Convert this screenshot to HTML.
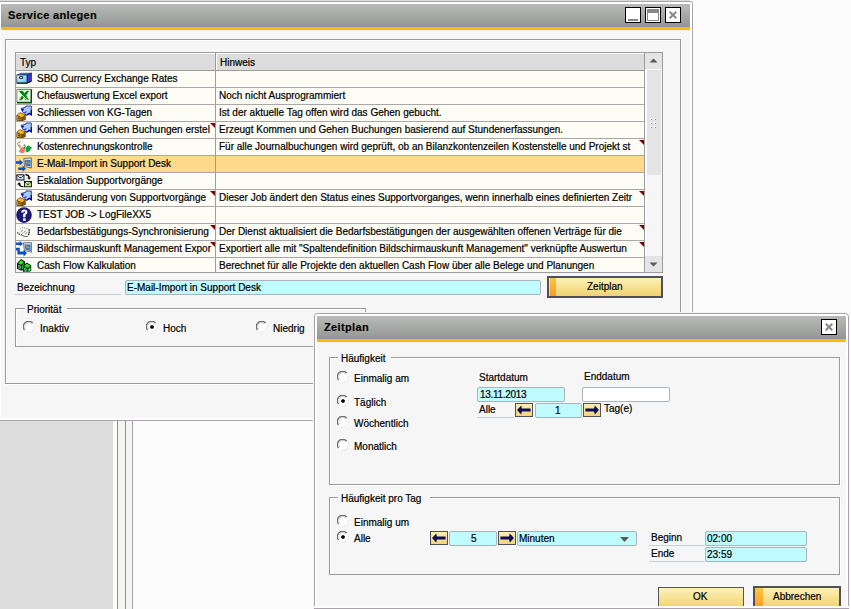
<!DOCTYPE html>
<html><head><meta charset="utf-8"><style>
*{margin:0;padding:0;box-sizing:border-box}
html,body{width:851px;height:609px;overflow:hidden;background:#fcfcfc;font-family:"Liberation Sans",sans-serif;font-size:10px;color:#000}
.a{position:absolute}
.t{position:absolute;white-space:nowrap;line-height:12px;height:12px;-webkit-text-stroke:0.2px #000}
.title{background:linear-gradient(#bcbdbb,#8e8f8d)}
.yel{background:#fbb80d}
.inp{position:absolute;background:#bffbff;border:1px solid #a9b5b8;border-radius:2px}
.btn{position:absolute;background:linear-gradient(#fdf1b9,#f1d26f);border:1px solid #55555c}
.arr{position:absolute;background:linear-gradient(#fdeeb0,#f3d47a);border:1px solid #505058}
.radio{position:absolute;width:11px;height:11px;border-radius:50%;background:#fff;border:1.5px solid;border-color:#6e6e6e #e8e8e8 #ffffff #7e7e7e}
.radio.on::after{content:"";position:absolute;left:2px;top:2px;width:4px;height:4px;border-radius:50%;background:#000}
.tri{position:absolute;width:0;height:0;border-top:5px solid #800000;border-left:5px solid transparent}
svg{position:absolute}
</style></head><body>
<div class="a" style="left:0px;top:0px;width:690px;height:1px;background:#dadada"></div>
<div class="a" style="left:0px;top:421px;width:113px;height:188px;background:#dcdcdc"></div>
<div class="a" style="left:113px;top:421px;width:4px;height:188px;background:#fdfdf2"></div>
<div class="a" style="left:117px;top:421px;width:1px;height:188px;background:#8e8e8e"></div>
<div class="a" style="left:118px;top:421px;width:7px;height:188px;background:#f5f5f5"></div>
<div class="a" style="left:125px;top:421px;width:1px;height:188px;background:#8e8e8e"></div>
<div class="a" style="left:126px;top:421px;width:6px;height:188px;background:#f5f5f5"></div>
<div class="a" style="left:132px;top:421px;width:1px;height:188px;background:#a8a0a8"></div>
<div class="a" style="left:-2px;top:1px;width:695px;height:420px;background:#fff;border:1px solid #aba3ab;border-radius:0 2px 0 0"></div>
<div class="a" style="left:1px;top:4px;width:689px;height:23px;background:linear-gradient(#b9bab7,#959794)"></div>
<div class="a" style="left:1px;top:26px;width:689px;height:1px;background:#8f959b"></div>
<div class="a" style="left:1px;top:27px;width:689px;height:3px;background:#fbb80d"></div>
<div class="a" style="left:1px;top:30px;width:689px;height:388px;background:#f6f6f6"></div>
<div class="t" style="left:8px;top:9px;font-weight:bold;font-size:11px;line-height:13px;height:13px;letter-spacing:0.35px;-webkit-text-stroke:0.15px #000">Service anlegen</div>
<div class="a" style="left:625px;top:7px;width:16px;height:16px;background:#fff;border:1px solid #000"><div class="a" style="left:2px;top:11px;width:10px;height:2px;background:#888"></div></div>
<div class="a" style="left:645px;top:7px;width:16px;height:16px;background:#fff;border:1px solid #000"><div class="a" style="left:1px;top:1px;width:12px;height:12px;border:1px solid #888;border-top:4px solid #888"></div></div>
<div class="a" style="left:665px;top:7px;width:16px;height:16px;background:#fff;border:1px solid #000"><svg style="left:3px;top:3px" width="8" height="8" viewBox="0 0 8 8"><path d="M0.7 0.7L7.3 7.3M7.3 0.7L0.7 7.3" stroke="#888" stroke-width="2"/></svg></div>
<div class="a" style="left:6px;top:40px;width:676px;height:345px;border:1px solid #fff"></div>
<div class="a" style="left:5px;top:39px;width:676px;height:345px;border:1px solid #9a9a9a"></div>
<div class="a" style="left:15px;top:52px;width:648px;height:221px;border:1px solid #9c9c9c;background:#fdfdf5"></div>
<div class="a" style="left:16px;top:53px;width:628px;height:17px;background:#dcdcdc;border-top:1px solid #fff"></div>
<div class="a" style="left:16px;top:70px;width:628px;height:1px;background:#9c9c9c"></div>
<div class="a" style="left:215px;top:53px;width:1px;height:219px;background:#9c9c9c"></div>
<div class="a" style="left:216px;top:54px;width:1px;height:16px;background:#fff"></div>
<div class="a" style="left:644px;top:53px;width:1px;height:219px;background:#9c9c9c"></div>
<div class="t" style="left:20px;top:57px;">Typ</div>
<div class="t" style="left:220px;top:57px;">Hinweis</div>
<div class="a" style="left:16px;top:87px;width:628px;height:1px;background:#a8a8a8"></div>
<div class="a" style="left:16px;top:71px;width:16px;height:16px;overflow:hidden"><svg width="16" height="16" viewBox="0 0 16 16"><defs><linearGradient id="gs" x1="0" y1="0" x2="1" y2="1"><stop offset="0" stop-color="#f4fdff"/><stop offset="0.35" stop-color="#a8e6fa"/><stop offset="1" stop-color="#58c8f0"/></linearGradient></defs><path d="M1 4L5 2.2H15.6L11 4Z" fill="#1a90f0" stroke="#0a0a40" stroke-width="0.5"/><path d="M11 4L15.6 2.2V10L11 12Z" fill="#3a38d0" stroke="#0a0a40" stroke-width="0.6"/><rect x="0.8" y="4" width="10.2" height="8" fill="url(#gs)" stroke="#202040" stroke-width="0.7"/><rect x="3" y="5.2" width="4.2" height="2.6" rx="1" fill="#101030"/><rect x="4.2" y="6" width="2" height="1" fill="#fff0e0"/><path d="M0.8 12.2H11L15.6 10.2" stroke="#000" stroke-width="1" fill="none"/></svg></div>
<div class="t" style="left:37px;top:73px;width:177px;overflow:hidden">SBO Currency Exchange Rates</div>
<div class="a" style="left:16px;top:104px;width:628px;height:1px;background:#a8a8a8"></div>
<div class="a" style="left:16px;top:88px;width:16px;height:16px;overflow:hidden"><svg width="16" height="16" viewBox="0 0 16 16"><rect x="0.5" y="0.8" width="15.2" height="14" fill="#fff"/><path d="M0.9 14.6V1.2" stroke="#8a9a70" stroke-width="1.2" fill="none"/><path d="M0.9 1.4H15.3" stroke="#30c030" stroke-width="1.2" fill="none"/><path d="M15.3 1.2V14.6H0.9" stroke="#005000" stroke-width="1.6" fill="none"/><path d="M2.8 2.8H6.8L8.4 5.2L10.8 2.8H13.2L10.2 7.4L13.2 12.2H9.6L7.8 9.6L6 12.2H2.8L6 7.6Z" fill="#008a00"/><path d="M4 5.4L11.8 12.4" stroke="#fff" stroke-width="0.9"/><path d="M3.6 8.6L5.5 11.6H3.6Z" fill="#b0a080"/></svg></div>
<div class="t" style="left:37px;top:90px;width:177px;overflow:hidden">Chefauswertung Excel export</div>
<div class="t" style="left:219px;top:90px;width:424px;overflow:hidden">Noch nicht Ausprogrammiert</div>
<div class="a" style="left:16px;top:121px;width:628px;height:1px;background:#a8a8a8"></div>
<div class="a" style="left:16px;top:105px;width:16px;height:16px;overflow:hidden"><svg width="16" height="16" viewBox="0 0 16 16"><path d="M0.5 10.2L0.5 15.8L6 16L9.6 15V9.8L4 7.2Z" fill="#402000"/><path d="M1 10.2L4 7.8L9 10L6 12.4Z" fill="#f4bc14"/><path d="M1 10.8L5.6 12.9V15.6L1 15.2Z" fill="#c08a10"/><path d="M6.4 12.9L9.2 10.6V14.8L6.4 15.6Z" fill="#8a5a08"/><path d="M2 13L4.4 14.2" stroke="#4a2800" stroke-width="0.9"/><path d="M5 3.4L9.6 2.4L10 1H15.3V9.8L13.2 8.4L10.6 10.4L8.6 8.8L10.4 6.8L7.2 7.8Z" fill="#a8cdf5" stroke="#1414a8" stroke-width="0.8" stroke-linejoin="round"/><circle cx="6.6" cy="4.6" r="1.2" fill="#0a0ae8"/><path d="M10.6 10.2L13.2 8.4L15.3 9.8V5" stroke="#0000a0" stroke-width="1.3" fill="none"/></svg></div>
<div class="t" style="left:37px;top:107px;width:177px;overflow:hidden">Schliessen von KG-Tagen</div>
<div class="t" style="left:219px;top:107px;width:424px;overflow:hidden">Ist der aktuelle Tag offen wird das Gehen gebucht.</div>
<div class="a" style="left:16px;top:138px;width:628px;height:1px;background:#a8a8a8"></div>
<div class="a" style="left:16px;top:122px;width:16px;height:16px;overflow:hidden"><svg width="16" height="16" viewBox="0 0 16 16"><path d="M0.5 10.2L0.5 15.8L6 16L9.6 15V9.8L4 7.2Z" fill="#402000"/><path d="M1 10.2L4 7.8L9 10L6 12.4Z" fill="#f4bc14"/><path d="M1 10.8L5.6 12.9V15.6L1 15.2Z" fill="#c08a10"/><path d="M6.4 12.9L9.2 10.6V14.8L6.4 15.6Z" fill="#8a5a08"/><path d="M2 13L4.4 14.2" stroke="#4a2800" stroke-width="0.9"/><path d="M5 3.4L9.6 2.4L10 1H15.3V9.8L13.2 8.4L10.6 10.4L8.6 8.8L10.4 6.8L7.2 7.8Z" fill="#a8cdf5" stroke="#1414a8" stroke-width="0.8" stroke-linejoin="round"/><circle cx="6.6" cy="4.6" r="1.2" fill="#0a0ae8"/><path d="M10.6 10.2L13.2 8.4L15.3 9.8V5" stroke="#0000a0" stroke-width="1.3" fill="none"/></svg></div>
<div class="t" style="left:37px;top:124px;width:177px;overflow:hidden">Kommen und Gehen Buchungen erstel</div>
<div class="t" style="left:219px;top:124px;width:424px;overflow:hidden">Erzeugt Kommen und Gehen Buchungen basierend auf Stundenerfassungen.</div>
<div class="tri" style="left:210px;top:123px"></div>
<div class="a" style="left:16px;top:155px;width:628px;height:1px;background:#a8a8a8"></div>
<div class="a" style="left:16px;top:139px;width:16px;height:16px;overflow:hidden"><svg width="16" height="16" viewBox="0 0 16 16"><path d="M1.5 5.4L4.2 2.2" stroke="#404040" stroke-width="1.2" stroke-dasharray="1 0.9"/><path d="M2.6 5.8L4.6 8.6" stroke="#a8a878" stroke-width="2"/><circle cx="1.4" cy="6.4" r="0.7" fill="#e8d870"/><path d="M4 10.2L6.6 7.6L9.2 9.6L8.4 13.6L6 14.4L3.4 12.6Z" fill="#f07868"/><path d="M3.4 12.4L4.2 13.4" stroke="#506070" stroke-width="1"/><path d="M7.2 7L8.6 5.2L9.4 6.4Z" fill="#005a20"/><path d="M7.6 8.2L9.6 6.6L9.2 10.4L8.4 9.6Z" fill="#10a040"/><path d="M10 8.4L12.2 6.2L14.2 7.6L15.6 9L13.6 12L11 13.4L9.6 12Z" fill="#0aa040"/><path d="M14.4 9.4L16 8.8" stroke="#7080a0" stroke-width="1"/></svg></div>
<div class="t" style="left:37px;top:141px;width:177px;overflow:hidden">Kostenrechnungskontrolle</div>
<div class="t" style="left:219px;top:141px;width:424px;overflow:hidden">Für alle Journalbuchungen wird geprüft, ob an Bilanzkontenzeilen Kostenstelle und Projekt st</div>
<div class="tri" style="left:639px;top:140px"></div>
<div class="a" style="left:16px;top:156px;width:199px;height:16px;background:#fdd98b"></div>
<div class="a" style="left:216px;top:156px;width:428px;height:16px;background:#fdd98b"></div>
<div class="a" style="left:16px;top:172px;width:628px;height:1px;background:#a8a8a8"></div>
<div class="a" style="left:16px;top:156px;width:16px;height:16px;overflow:hidden"><svg width="16" height="16" viewBox="0 0 16 16"><path d="M0 5.2H3.6V3.4L7 6.5L3.6 9.6V7.8H0Z" fill="#0a4ec8"/><path d="M2.2 11.4H6.6V9.6L10 12.7L6.6 15.8V14H2.2Z" fill="#0a4ec8"/><path d="M7.8 2.4L15.6 2V12L8.6 10.6Z" fill="#d8dce4" stroke="#505860" stroke-width="0.8"/><path d="M8.9 4.2L14.6 4V10.4L9.4 9.4Z" fill="#3a70c0"/><path d="M10 6.2L13.8 7.6" stroke="#e0a040" stroke-width="1.2"/><path d="M10 8L13 6" stroke="#40b080" stroke-width="0.8"/></svg></div>
<div class="t" style="left:37px;top:158px;width:177px;overflow:hidden">E-Mail-Import in Support Desk</div>
<div class="a" style="left:16px;top:189px;width:628px;height:1px;background:#a8a8a8"></div>
<div class="a" style="left:16px;top:173px;width:16px;height:16px;overflow:hidden"><svg width="16" height="16" viewBox="0 0 16 16"><rect x="0.8" y="1.8" width="7.2" height="5.2" fill="#c8e6fa" stroke="#000" stroke-width="0.9"/><path d="M1.2 2.4L2.6 3.8M7.6 2.4L6.2 3.8M3.2 4.6H5.6" stroke="#000" stroke-width="0.9"/><path d="M9.4 1.6Q12.6 1.6 13.4 4.6" stroke="#000" stroke-width="1.3" fill="none"/><path d="M11.2 4.4H15L13.2 6.8Z" fill="#000"/><rect x="8.4" y="8.4" width="7" height="5.4" fill="#c8e890" stroke="#000" stroke-width="0.9"/><path d="M8.8 9L10.2 10.4M15 9L13.6 10.4M10.8 11.2H13" stroke="#000" stroke-width="0.9"/><path d="M3.2 11Q3.6 13.6 7.4 13.6" stroke="#000" stroke-width="1.4" fill="none"/><path d="M1 11.6L3.2 9.2L5.2 11.4Z" fill="#000"/></svg></div>
<div class="t" style="left:37px;top:175px;width:177px;overflow:hidden">Eskalation Supportvorgänge</div>
<div class="a" style="left:16px;top:206px;width:628px;height:1px;background:#a8a8a8"></div>
<div class="a" style="left:16px;top:190px;width:16px;height:16px;overflow:hidden"><svg width="16" height="16" viewBox="0 0 16 16"><path d="M0.5 10.2L0.5 15.8L6 16L9.6 15V9.8L4 7.2Z" fill="#402000"/><path d="M1 10.2L4 7.8L9 10L6 12.4Z" fill="#f4bc14"/><path d="M1 10.8L5.6 12.9V15.6L1 15.2Z" fill="#c08a10"/><path d="M6.4 12.9L9.2 10.6V14.8L6.4 15.6Z" fill="#8a5a08"/><path d="M2 13L4.4 14.2" stroke="#4a2800" stroke-width="0.9"/><path d="M5 3.4L9.6 2.4L10 1H15.3V9.8L13.2 8.4L10.6 10.4L8.6 8.8L10.4 6.8L7.2 7.8Z" fill="#a8cdf5" stroke="#1414a8" stroke-width="0.8" stroke-linejoin="round"/><circle cx="6.6" cy="4.6" r="1.2" fill="#0a0ae8"/><path d="M10.6 10.2L13.2 8.4L15.3 9.8V5" stroke="#0000a0" stroke-width="1.3" fill="none"/></svg></div>
<div class="t" style="left:37px;top:192px;width:177px;overflow:hidden">Statusänderung von Supportvorgänge</div>
<div class="t" style="left:219px;top:192px;width:424px;overflow:hidden">Dieser Job ändert den Status eines Supportvorganges, wenn innerhalb eines definierten Zeitr</div>
<div class="tri" style="left:210px;top:191px"></div>
<div class="tri" style="left:639px;top:191px"></div>
<div class="a" style="left:16px;top:223px;width:628px;height:1px;background:#a8a8a8"></div>
<div class="a" style="left:16px;top:207px;width:16px;height:16px;overflow:hidden"><svg width="16" height="16" viewBox="0 0 16 16"><circle cx="8" cy="8.1" r="7.8" fill="#1c1a6e"/><path d="M5.2 5.6Q5.2 2.4 8.4 2.4Q11.4 2.4 11.4 5.2Q11.4 6.9 9.5 7.8V10.2H7.1V7Q9 6.2 9 5.2Q9 4.2 8.3 4.2Q7.6 4.2 7.6 5.6Z" fill="#fff"/><rect x="7.1" y="11.3" width="2.5" height="2.6" fill="#fff"/></svg></div>
<div class="t" style="left:37px;top:209px;width:177px;overflow:hidden">TEST JOB -&gt; LogFileXX5</div>
<div class="a" style="left:16px;top:240px;width:628px;height:1px;background:#a8a8a8"></div>
<div class="a" style="left:16px;top:224px;width:16px;height:16px;overflow:hidden"><svg width="16" height="16" viewBox="0 0 16 16"><path d="M1.5 8.5L3 10L5 10.8L7 11.8L9.6 12.6L11.6 12.4" stroke="#000" stroke-width="1.1" stroke-dasharray="1.1 0.9" fill="none"/><path d="M13.2 5.2V8.4L12.4 11.6" stroke="#000" stroke-width="1.2" stroke-dasharray="1.6 0.6" fill="none"/><path d="M4.4 4.8L6.4 3.6L8.2 3.8L10.4 4.6L12.6 5" stroke="#606060" stroke-width="0.9" stroke-dasharray="0.9 1" fill="none"/><path d="M4.8 8L7.6 5.4M6.6 9.4L10.2 6.4M8.8 10.4L11.6 8" stroke="#303030" stroke-width="0.9" stroke-dasharray="1 1" fill="none"/></svg></div>
<div class="t" style="left:37px;top:226px;width:177px;overflow:hidden">Bedarfsbestätigungs-Synchronisierung</div>
<div class="t" style="left:219px;top:226px;width:424px;overflow:hidden">Der Dienst aktualisiert die Bedarfsbestätigungen der ausgewählten offenen Verträge für die</div>
<div class="tri" style="left:210px;top:225px"></div>
<div class="tri" style="left:639px;top:225px"></div>
<div class="a" style="left:16px;top:257px;width:628px;height:1px;background:#a8a8a8"></div>
<div class="a" style="left:16px;top:241px;width:16px;height:16px;overflow:hidden"><svg width="16" height="16" viewBox="0 0 16 16"><path d="M0 1.6H3.6V0L7 2.8L3.6 5.6V4H0Z" fill="#0a4ec8"/><path d="M0 6.8H3.8V10.4H7.6V8.8L11 12L7.6 15.8V13.4H1.4V9.4H0Z" fill="#0a4ec8"/><path d="M7.4 1.8L15.6 1.6V11.2L8.4 9.4Z" fill="#d8dce4" stroke="#505860" stroke-width="0.8"/><path d="M8.6 3.4L14.6 3.4V10L9.4 8.6Z" fill="#3a70c0"/><path d="M10 5.2L13.6 7.2" stroke="#e0a040" stroke-width="1.2"/><path d="M9.8 7L12.6 5.2" stroke="#40b080" stroke-width="0.8"/></svg></div>
<div class="t" style="left:37px;top:243px;width:177px;overflow:hidden">Bildschirmauskunft Management Expor</div>
<div class="t" style="left:219px;top:243px;width:424px;overflow:hidden">Exportiert alle mit "Spaltendefinition Bildschirmauskunft Management" verknüpfte Auswertun</div>
<div class="tri" style="left:210px;top:242px"></div>
<div class="tri" style="left:639px;top:242px"></div>
<div class="a" style="left:16px;top:258px;width:16px;height:14px;overflow:hidden"><svg width="16" height="16" viewBox="0 0 16 16"><path d="M1 5.2L5 1L9 3.6V11.6L5.4 12.8L1 10.8Z" fill="#000"/><path d="M2 5.2L5 2L8 4.2L5.2 7Z" fill="#1aee1a"/><path d="M2 6.6L5 8.2V11.6L2 10.2Z" fill="#8af0b8"/><path d="M2 7.8L5 9.4M2 9.2L5 10.8" stroke="#000" stroke-width="0.6"/><path d="M5.6 8L8.4 5.4V10.8L5.6 11.8Z" fill="#10c010"/><path d="M7.2 8L10.6 4.6L15.2 7.2V12.2L12 15.6H9.6L7.2 13.8Z" fill="#000"/><path d="M8 8.2L10.6 5.6L14.4 7.6L11.8 10Z" fill="#1aee1a"/><path d="M8 9.4L11.4 11V14.8L8 13.2Z" fill="#80eec8"/><path d="M8 10.8L11.4 12.4M8 12.2L11.4 13.8" stroke="#000" stroke-width="0.6"/><path d="M12.2 11L14.6 8.6V12L12.2 14.6Z" fill="#18d018"/><path d="M12.8 12L14 10.8M12.8 13.4L14 12.2" stroke="#a0ffe0" stroke-width="0.7"/></svg></div>
<div class="t" style="left:37px;top:260px;width:177px;overflow:hidden">Cash Flow Kalkulation</div>
<div class="t" style="left:219px;top:260px;width:424px;overflow:hidden">Berechnet für alle Projekte den aktuellen Cash Flow über alle Belege und Planungen</div>
<div class="a" style="left:645px;top:53px;width:17px;height:219px;background:#f6f6f6"></div>
<div class="a" style="left:645px;top:70px;width:2px;height:186px;background:#fcfcfc"></div>
<div class="a" style="left:645px;top:53px;width:17px;height:16px;background:#e4e4e4"></div>
<svg style="left:649px;top:58px" width="9" height="5"><path d="M0.5 4.5L4.5 0.5L8.5 4.5Z" fill="#5a5a5a"/></svg>
<div class="a" style="left:645px;top:69px;width:17px;height:1px;background:#f8f8f8"></div>
<div class="a" style="left:647px;top:70px;width:14px;height:105px;background:#e4e4e4"></div>
<div class="a" style="left:650px;top:118px;width:2px;height:2px;background:#8c8c8c;border-top:1px solid #fff;border-left:1px solid #fff"></div>
<div class="a" style="left:654px;top:118px;width:2px;height:2px;background:#8c8c8c;border-top:1px solid #fff;border-left:1px solid #fff"></div>
<div class="a" style="left:650px;top:122px;width:2px;height:2px;background:#8c8c8c;border-top:1px solid #fff;border-left:1px solid #fff"></div>
<div class="a" style="left:654px;top:122px;width:2px;height:2px;background:#8c8c8c;border-top:1px solid #fff;border-left:1px solid #fff"></div>
<div class="a" style="left:650px;top:126px;width:2px;height:2px;background:#8c8c8c;border-top:1px solid #fff;border-left:1px solid #fff"></div>
<div class="a" style="left:654px;top:126px;width:2px;height:2px;background:#8c8c8c;border-top:1px solid #fff;border-left:1px solid #fff"></div>
<div class="a" style="left:645px;top:256px;width:17px;height:16px;background:#e4e4e4"></div>
<svg style="left:649px;top:262px" width="9" height="5"><path d="M0.5 0.5L4.5 4.5L8.5 0.5Z" fill="#5a5a5a"/></svg>
<div class="t" style="left:17px;top:282px;">Bezeichnung</div>
<div class="a" style="left:15px;top:294px;width:106px;height:1px;background:#c8d0d8"></div>
<div class="inp" style="left:125px;top:280px;width:416px;height:15px"></div>
<div class="t" style="left:127px;top:282px;">E-Mail-Import in Support Desk</div>
<div class="a" style="left:547px;top:276px;width:116px;height:22px;border:2px solid #505058;background:linear-gradient(#fdf1b9,#f1d26f)"><div class="a" style="left:1px;top:0;width:6px;height:18px;background:linear-gradient(#fdc440,#f79e1c)"></div></div>
<div class="t" style="left:587px;top:281px;">Zeitplan</div>
<div class="a" style="left:16px;top:309px;width:350px;height:38px;border:1px solid #fff"></div>
<div class="a" style="left:15px;top:308px;width:351px;height:39px;border:1px solid #9a9a9a"></div>
<div class="a" style="left:25px;top:303px;width:42px;height:12px;background:#f6f6f6"></div>
<div class="t" style="left:27px;top:304px;">Priorität</div>
<svg style="left:22.5px;top:321px" width="12" height="12" viewBox="0 0 12 12"><circle cx="6" cy="6" r="5.2" fill="#fff"/><path d="M1.5 9A5.2 5.2 0 0 1 9.8 2.2" stroke="#6e6e6e" stroke-width="1.3" fill="none"/><path d="M2.6 8.2A4 4 0 0 1 8.8 3" stroke="#c4c4c4" stroke-width="0.8" fill="none"/><path d="M10.9 4.4A5.2 5.2 0 0 1 4 10.9" stroke="#e2e2e2" stroke-width="0.8" fill="none"/></svg>
<div class="t" style="left:40px;top:323px;">Inaktiv</div>
<svg style="left:145.5px;top:321px" width="12" height="12" viewBox="0 0 12 12"><circle cx="6" cy="6" r="5.2" fill="#fff"/><path d="M1.5 9A5.2 5.2 0 0 1 9.8 2.2" stroke="#6e6e6e" stroke-width="1.3" fill="none"/><path d="M2.6 8.2A4 4 0 0 1 8.8 3" stroke="#c4c4c4" stroke-width="0.8" fill="none"/><path d="M10.9 4.4A5.2 5.2 0 0 1 4 10.9" stroke="#e2e2e2" stroke-width="0.8" fill="none"/><path d="M5.2 4.2H6.8L7.8 5.2V6.8L6.8 7.8H5.2L4.2 6.8V5.2Z" fill="#000"/></svg>
<div class="t" style="left:163px;top:323px;">Hoch</div>
<svg style="left:255.5px;top:321px" width="12" height="12" viewBox="0 0 12 12"><circle cx="6" cy="6" r="5.2" fill="#fff"/><path d="M1.5 9A5.2 5.2 0 0 1 9.8 2.2" stroke="#6e6e6e" stroke-width="1.3" fill="none"/><path d="M2.6 8.2A4 4 0 0 1 8.8 3" stroke="#c4c4c4" stroke-width="0.8" fill="none"/><path d="M10.9 4.4A5.2 5.2 0 0 1 4 10.9" stroke="#e2e2e2" stroke-width="0.8" fill="none"/></svg>
<div class="t" style="left:273px;top:323px;">Niedrig</div>
<div class="a" style="left:314px;top:313px;width:535px;height:300px;background:#fff;border:1px solid #aba3ab;border-radius:3px 4px 0 0;box-shadow:0 0 0 1px #f4f4f4"></div>
<div class="a" style="left:317px;top:316px;width:529px;height:23px;background:linear-gradient(#b9bab7,#959794)"></div>
<div class="a" style="left:317px;top:338px;width:529px;height:1px;background:#8f959b"></div>
<div class="a" style="left:317px;top:339px;width:529px;height:3px;background:#fbb80d"></div>
<div class="a" style="left:317px;top:342px;width:529px;height:264px;background:#f6f6f6"></div>
<div class="t" style="left:324px;top:321px;font-weight:bold;font-size:11px;line-height:13px;height:13px;letter-spacing:0.35px;-webkit-text-stroke:0.15px #000">Zeitplan</div>
<div class="a" style="left:821px;top:319px;width:16px;height:16px;background:#fff;border:1px solid #000"><svg style="left:3px;top:3px" width="8" height="8" viewBox="0 0 8 8"><path d="M0.7 0.7L7.3 7.3M7.3 0.7L0.7 7.3" stroke="#888" stroke-width="2"/></svg></div>
<div class="a" style="left:330px;top:358px;width:511px;height:128px;border:1px solid #fff"></div>
<div class="a" style="left:329px;top:357px;width:511px;height:128px;border:1px solid #9a9a9a"></div>
<div class="a" style="left:338px;top:351px;width:53px;height:12px;background:#f6f6f6"></div>
<div class="t" style="left:341px;top:353px;">Häufigkeit</div>
<svg style="left:336.5px;top:371px" width="12" height="12" viewBox="0 0 12 12"><circle cx="6" cy="6" r="5.2" fill="#fff"/><path d="M1.5 9A5.2 5.2 0 0 1 9.8 2.2" stroke="#6e6e6e" stroke-width="1.3" fill="none"/><path d="M2.6 8.2A4 4 0 0 1 8.8 3" stroke="#c4c4c4" stroke-width="0.8" fill="none"/><path d="M10.9 4.4A5.2 5.2 0 0 1 4 10.9" stroke="#e2e2e2" stroke-width="0.8" fill="none"/></svg>
<div class="t" style="left:354px;top:373px;">Einmalig am</div>
<svg style="left:336.5px;top:395px" width="12" height="12" viewBox="0 0 12 12"><circle cx="6" cy="6" r="5.2" fill="#fff"/><path d="M1.5 9A5.2 5.2 0 0 1 9.8 2.2" stroke="#6e6e6e" stroke-width="1.3" fill="none"/><path d="M2.6 8.2A4 4 0 0 1 8.8 3" stroke="#c4c4c4" stroke-width="0.8" fill="none"/><path d="M10.9 4.4A5.2 5.2 0 0 1 4 10.9" stroke="#e2e2e2" stroke-width="0.8" fill="none"/><path d="M5.2 4.2H6.8L7.8 5.2V6.8L6.8 7.8H5.2L4.2 6.8V5.2Z" fill="#000"/></svg>
<div class="t" style="left:354px;top:397px;">Täglich</div>
<svg style="left:336.5px;top:416px" width="12" height="12" viewBox="0 0 12 12"><circle cx="6" cy="6" r="5.2" fill="#fff"/><path d="M1.5 9A5.2 5.2 0 0 1 9.8 2.2" stroke="#6e6e6e" stroke-width="1.3" fill="none"/><path d="M2.6 8.2A4 4 0 0 1 8.8 3" stroke="#c4c4c4" stroke-width="0.8" fill="none"/><path d="M10.9 4.4A5.2 5.2 0 0 1 4 10.9" stroke="#e2e2e2" stroke-width="0.8" fill="none"/></svg>
<div class="t" style="left:354px;top:418px;">Wöchentlich</div>
<svg style="left:336.5px;top:439px" width="12" height="12" viewBox="0 0 12 12"><circle cx="6" cy="6" r="5.2" fill="#fff"/><path d="M1.5 9A5.2 5.2 0 0 1 9.8 2.2" stroke="#6e6e6e" stroke-width="1.3" fill="none"/><path d="M2.6 8.2A4 4 0 0 1 8.8 3" stroke="#c4c4c4" stroke-width="0.8" fill="none"/><path d="M10.9 4.4A5.2 5.2 0 0 1 4 10.9" stroke="#e2e2e2" stroke-width="0.8" fill="none"/></svg>
<div class="t" style="left:354px;top:441px;">Monatlich</div>
<div class="t" style="left:479px;top:372px;">Startdatum</div>
<div class="t" style="left:584px;top:371px;">Enddatum</div>
<div class="inp" style="left:477px;top:387px;width:88px;height:15px"></div>
<div class="t" style="left:480px;top:389px;letter-spacing:-0.3px">13.11.2013</div>
<div class="inp" style="left:582px;top:387px;width:88px;height:15px;background:#fff"></div>
<div class="t" style="left:479px;top:404px;">Alle</div>
<div class="a" style="left:477px;top:417px;width:37px;height:1px;background:#c8d0d8"></div>
<div class="arr" style="left:515px;top:403px;width:18px;height:14px"><svg style="left:0;top:0" width="16" height="12" viewBox="0 0 16 12"><path d="M1 6L5.2 1.6Q5.6 3.5 6 4.6H14.6V7.4H6Q5.6 8.5 5.2 10.4Z" fill="#0e0e58"/></svg></div>
<div class="inp" style="left:535px;top:403px;width:47px;height:15px"></div>
<div class="t" style="left:555px;top:405px;">1</div>
<div class="arr" style="left:583px;top:403px;width:18px;height:14px"><svg style="left:0;top:0" width="16" height="12" viewBox="0 0 16 12"><path d="M1 6L5.2 1.6Q5.6 3.5 6 4.6H14.6V7.4H6Q5.6 8.5 5.2 10.4Z" fill="#0e0e58" transform="translate(16 0) scale(-1 1)"/></svg></div>
<div class="t" style="left:604px;top:403px;">Tag(e)</div>
<div class="a" style="left:330px;top:498px;width:511px;height:77px;border:1px solid #fff"></div>
<div class="a" style="left:329px;top:497px;width:511px;height:78px;border:1px solid #9a9a9a"></div>
<div class="a" style="left:338px;top:491px;width:92px;height:12px;background:#f6f6f6"></div>
<div class="t" style="left:341px;top:493px;">Häufigkeit pro Tag</div>
<svg style="left:336.5px;top:515px" width="12" height="12" viewBox="0 0 12 12"><circle cx="6" cy="6" r="5.2" fill="#fff"/><path d="M1.5 9A5.2 5.2 0 0 1 9.8 2.2" stroke="#6e6e6e" stroke-width="1.3" fill="none"/><path d="M2.6 8.2A4 4 0 0 1 8.8 3" stroke="#c4c4c4" stroke-width="0.8" fill="none"/><path d="M10.9 4.4A5.2 5.2 0 0 1 4 10.9" stroke="#e2e2e2" stroke-width="0.8" fill="none"/></svg>
<div class="t" style="left:354px;top:517px;">Einmalig um</div>
<svg style="left:336.5px;top:531px" width="12" height="12" viewBox="0 0 12 12"><circle cx="6" cy="6" r="5.2" fill="#fff"/><path d="M1.5 9A5.2 5.2 0 0 1 9.8 2.2" stroke="#6e6e6e" stroke-width="1.3" fill="none"/><path d="M2.6 8.2A4 4 0 0 1 8.8 3" stroke="#c4c4c4" stroke-width="0.8" fill="none"/><path d="M10.9 4.4A5.2 5.2 0 0 1 4 10.9" stroke="#e2e2e2" stroke-width="0.8" fill="none"/><path d="M5.2 4.2H6.8L7.8 5.2V6.8L6.8 7.8H5.2L4.2 6.8V5.2Z" fill="#000"/></svg>
<div class="t" style="left:354px;top:533px;">Alle</div>
<div class="arr" style="left:430px;top:531px;width:18px;height:14px"><svg style="left:0;top:0" width="16" height="12" viewBox="0 0 16 12"><path d="M1 6L5.2 1.6Q5.6 3.5 6 4.6H14.6V7.4H6Q5.6 8.5 5.2 10.4Z" fill="#0e0e58"/></svg></div>
<div class="inp" style="left:449px;top:531px;width:48px;height:15px"></div>
<div class="t" style="left:471px;top:533px;">5</div>
<div class="arr" style="left:498px;top:531px;width:18px;height:14px"><svg style="left:0;top:0" width="16" height="12" viewBox="0 0 16 12"><path d="M1 6L5.2 1.6Q5.6 3.5 6 4.6H14.6V7.4H6Q5.6 8.5 5.2 10.4Z" fill="#0e0e58" transform="translate(16 0) scale(-1 1)"/></svg></div>
<div class="inp" style="left:517px;top:531px;width:120px;height:15px"></div>
<div class="t" style="left:519px;top:533px;">Minuten</div>
<svg style="left:620px;top:537px" width="9" height="5"><path d="M0 0L4.5 5L9 0Z" fill="#5a5a5a"/></svg>
<div class="t" style="left:651px;top:532px;">Beginn</div>
<div class="a" style="left:649px;top:545px;width:56px;height:1px;background:#c8d0d8"></div>
<div class="inp" style="left:705px;top:531px;width:102px;height:15px"></div>
<div class="t" style="left:707px;top:533px;">02:00</div>
<div class="t" style="left:651px;top:548px;">Ende</div>
<div class="a" style="left:649px;top:561px;width:56px;height:1px;background:#c8d0d8"></div>
<div class="inp" style="left:705px;top:547px;width:102px;height:15px"></div>
<div class="t" style="left:707px;top:549px;">23:59</div>
<div class="a" style="left:658px;top:587px;width:86px;height:22px;border:1px solid #55555c;background:linear-gradient(#fdf1b9,#f1d26f)"></div>
<div class="t" style="left:693px;top:591px;">OK</div>
<div class="a" style="left:753px;top:586px;width:88px;height:23px;border:2px solid #505058;background:linear-gradient(#fdf1b9,#f1d26f)"><div class="a" style="left:0;top:0;width:8px;height:20px;background:linear-gradient(#fdc440,#f79e1c)"></div></div>
<div class="t" style="left:773px;top:591px;">Abbrechen</div>
<div class="a" style="left:314px;top:606px;width:535px;height:2px;background:#fff"></div>
<div class="a" style="left:314px;top:608px;width:535px;height:1px;background:#aba3ab"></div>
</body></html>
